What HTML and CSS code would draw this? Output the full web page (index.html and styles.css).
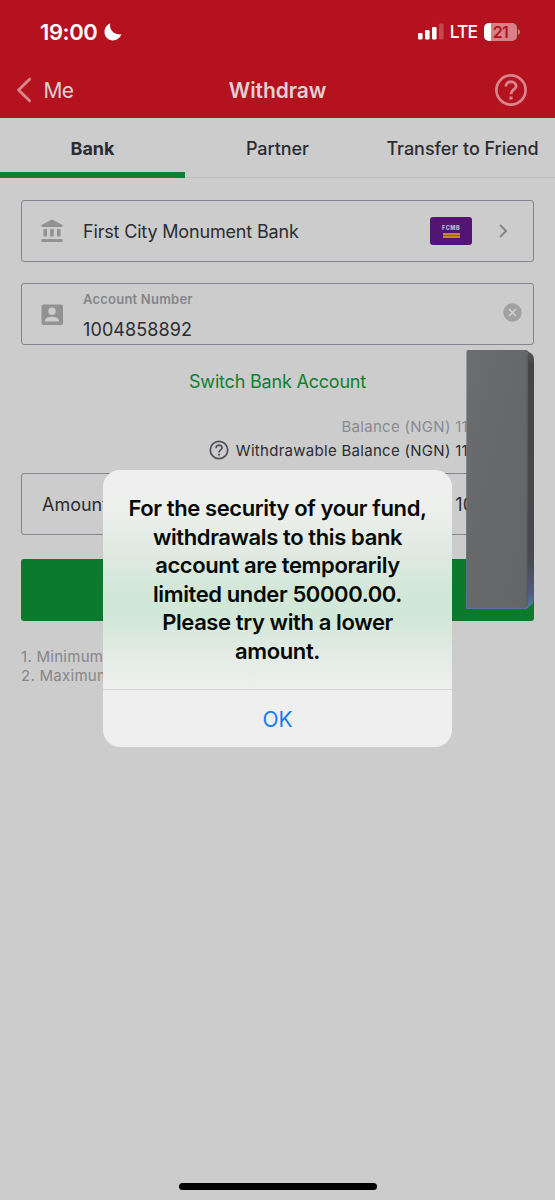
FILE: index.html
```html
<!DOCTYPE html>
<html lang="en">
<head>
<meta charset="utf-8">
<title>Withdraw</title>
<link rel="stylesheet" href="styles.css">
</head>
<body>
<div class="screen">
  <header class="header">
    <div class="status">
      <div class="status-left">
        <span class="clock">19:00</span>
        <svg class="moon" width="18" height="18" viewBox="0 0 18 18"><path d="M6.200.6C5 6.800 9.800 12.200 17.400 11.300C15.800 15.300 12.600 17.500 8.800 17.500C4 17.500.5 13.900.5 9.100C.5 5.200 2.700 1.900 6.200.6Z" fill="#fff"/></svg>
      </div>
      <div class="status-right">
        <svg width="26" height="17" viewBox="0 0 26 17" fill="#fff"><rect x="0" y="10" width="4.600" height="6.500" rx="1.300"/><rect x="7" y="7" width="4.600" height="9.500" rx="1.300"/><rect x="14" y="4" width="4.600" height="12.500" rx="1.300"/><rect x="21" y="0.500" width="4.600" height="16" rx="1.300" opacity=".22"/></svg>
        <span class="lte">LTE</span>
        <div class="battery"><span class="battery-level">21</span></div>
        <svg class="battery-tip" width="2" height="6" viewBox="0 0 2 6"><path d="M0 0Q2 1 2 3T0 6Z" fill="#da8087"/></svg>
      </div>
    </div>
    <nav class="nav">
      <div class="back">
        <svg width="16" height="26" viewBox="0 0 16 26"><path d="M13.600 2.200L2.600 13L13.600 23.800" fill="none" stroke="#d7858a" stroke-width="3" stroke-linecap="round" stroke-linejoin="round"/></svg>
        <span class="back-label">Me</span>
      </div>
      <h1 class="title">Withdraw</h1>
      <svg class="help" width="34" height="34" viewBox="0 0 34 34" fill="none" stroke="#d7858a"><circle cx="17" cy="17" r="14.600" stroke-width="2.700"/><path d="M11.900 13.500C11.900 10.500 14 8.700 17 8.700S22.100 10.600 22.100 13.200C22.100 16.500 17 16.600 17 21.300" stroke-width="2.900"/><path d="M17 23.500V26.500" stroke-width="3.200"/></svg>
    </nav>
  </header>
  <div class="tabs">
    <div class="tab tab-active">Bank</div>
    <div class="tab">Partner</div>
    <div class="tab">Transfer to Friend</div>
  </div>
  <main class="form">
    <div class="field">
      <svg class="field-icon" width="22" height="24" viewBox="0 0 22 24" fill="#929292"><path d="M11 .5L21.500 6V8H.5V6ZM2.500 10H6V17.500H2.500ZM9.200 10H12.700V17.500H9.200ZM16 10H19.500V17.500H16ZM.5 20H21.500V23H.5Z"/></svg>
      <span class="bank-name">First City Monument Bank</span>
      <div class="bank-logo"><span class="logo-text">FCMB</span><span class="logo-bars"></span></div>
      <svg class="chevron" width="8" height="14" viewBox="0 0 8 14"><path d="M1 1L7 7L1 13" fill="none" stroke="#85868b" stroke-width="2"/></svg>
    </div>
    <div class="field field-account">
      <svg class="field-icon" width="22" height="21" viewBox="0 0 22 21"><rect x=".5" y=".5" width="21.500" height="20.500" rx="2" fill="#929292"/><circle cx="11" cy="7.300" r="3.700" fill="#ccc"/><path d="M4 17.500V16.300C4 13.800 8.500 12.700 11 12.700S18 13.800 18 16.300V17.500Z" fill="#ccc"/></svg>
      <div class="account">
        <span class="account-label">Account Number</span>
        <span class="account-value">1004858892</span>
      </div>
      <svg class="clear" width="19" height="19" viewBox="0 0 19 19"><circle cx="9.500" cy="9.500" r="9.200" fill="#a1a1a1"/><path d="M6 6L13 13M13 6L6 13" stroke="#d0d0d0" stroke-width="1.600"/></svg>
    </div>
    <div class="switch">Switch Bank Account</div>
    <div class="balances">
      <div class="balance">Balance (NGN) 11</div>
      <div class="balance balance-dark">
        <svg width="20" height="20" viewBox="0 0 20 20" fill="none" stroke="#505156"><circle cx="10" cy="10" r="8.700" stroke-width="1.700"/><path d="M7 8.200C7 6.300 8.300 5.200 10 5.200S13 6.300 13 7.900C13 9.900 10 10 10 12.500" stroke-width="1.700"/><path d="M10 13.700V15.500" stroke-width="1.900"/></svg>
        <span>Withdrawable Balance (NGN) 11</span>
      </div>
    </div>
    <div class="field field-amount">
      <span>Amount</span>
      <span class="amount-value">10</span>
    </div>
    <div class="submit"></div>
    <div class="notes"><span>1. Minimum</span><span>2. Maximum</span></div>
  </main>
  <svg class="redaction" width="70" height="260" viewBox="0 0 70 260">
    <defs>
      <linearGradient id="face" x1="0" y1="0" x2="1" y2="1"><stop offset="0" stop-color="#6c6d6f"/><stop offset=".5" stop-color="#67686a"/><stop offset="1" stop-color="#646567"/></linearGradient>
      <linearGradient id="side" x1="0" y1="0" x2="0" y2="1"><stop offset="0" stop-color="#58585a"/><stop offset=".06" stop-color="#454548"/><stop offset=".8" stop-color="#48494c"/><stop offset=".94" stop-color="#505a80"/><stop offset="1" stop-color="#4682a5"/></linearGradient>
    </defs>
    <path d="M60 0L66 4Q68 6 68 9V249Q68 252 65 255L60 259Z" fill="url(#side)"/>
    <path d="M2 0H61L62 2L61 256L59 258.500H0L.5 2Q.5 0 2 0Z" fill="url(#face)"/>
    <path d="M61 3V256" stroke="#57585a" stroke-width="1"/>
    <path d="M0 208V258.300H61L67 252" fill="none" stroke="#6375a2" stroke-width="1"/>
  </svg>
  <div class="dialog">
    <div class="message">For the security of your fund,<br>withdrawals to this bank<br>account are temporarily<br>limited under 50000.00.<br>Please try with a lower<br>amount.</div>
    <div class="ok">OK</div>
  </div>
  <div class="home-bar"></div>
</div>
</body>
</html>
```

FILE: styles.css
```css
* { box-sizing: border-box; }
body { margin: 0; font-family: Inter, "Liberation Sans", sans-serif; }
.screen { position: relative; width: 555px; height: 1200px; background: #ccc; overflow: hidden; color: #2b2d33; white-space: nowrap; }
.header { height: 118px; background: #b5121f; }
.status { height: 62px; padding: 1px 35px 0 40px; display: flex; justify-content: space-between; align-items: center; color: #fff; }
.status-left, .status-right { display: flex; align-items: center; }
.clock { font-size: 22px; font-weight: 600; letter-spacing: -0.4px; }
.moon { margin-left: 7px; }
.lte { margin: 0 7px 0 6px; font-size: 17.500px; font-weight: 500; letter-spacing: -1px; }
.battery { width: 33px; height: 18px; border-radius: 5px; background: linear-gradient(90deg, #fff 7px, #da8087 7px); display: flex; align-items: center; justify-content: center; }
.battery-level { color: #b5121f; font-size: 16px; font-weight: 600; letter-spacing: -0.5px; }
.battery-tip { margin-left: 1px; }
.nav { height: 56px; padding: 0 27px 0 16px; display: grid; grid-template-columns: 1fr auto 1fr; align-items: center; color: #dfd0d1; }
.back { display: flex; align-items: center; gap: 11.500px; }
.back-label { font-size: 21px; letter-spacing: -0.6px; }
.title { margin: 0 0 0 11px; font-size: 21px; font-weight: 600; letter-spacing: -0.1px; }
.help { justify-self: end; margin-bottom: 1px; }
.tabs { display: grid; grid-template-columns: repeat(3, 1fr); height: 60px; }
.tab { display: flex; align-items: center; justify-content: center; border-bottom: 1px solid #bfbfbf; font-size: 18px; font-weight: 500; letter-spacing: -0.05px; padding-top: 1px; }
.tab-active { border-bottom: 6px solid #0d8032; font-weight: 700; padding-top: 6px; }
.form { padding: 22px 21px 0; }
.field { display: flex; align-items: center; height: 62px; border: 1.500px solid #85868d; border-radius: 3px; padding: 0 26px 0 19px; margin-bottom: 21px; }
.field-icon { flex: none; }
.bank-name { margin-left: 20px; font-size: 18px; letter-spacing: -0.17px; }
.bank-logo { margin-left: auto; width: 42px; height: 28px; border-radius: 3px; background: #531573; display: flex; flex-direction: column; align-items: center; justify-content: center; gap: 2px; }
.logo-text { font-size: 5.500px; line-height: 6px; font-weight: 800; letter-spacing: .5px; color: #c9b4d4; }
.logo-bars { width: 17px; height: 5px; background: linear-gradient(#c48926 2px, #96602f 2px, #96602f 3px, #c48926 3px); }
.chevron { margin-left: 27px; }
.field-account { padding-right: 11px; }
.account { display: flex; flex-direction: column; margin-left: 20px; padding-top: 3px; }
.account-label { font-size: 13px; line-height: 16px; font-weight: 600; letter-spacing: .22px; color: #85868b; }
.account-value { font-size: 18px; line-height: 22px; margin-top: 12px; letter-spacing: .1px; }
.clear { margin-left: auto; margin-bottom: 4px; }
.switch { text-align: center; height: 32px; line-height: 32px; font-size: 18px; letter-spacing: -0.2px; color: #0d8032; }
.balances { margin-top: 16px; }
.balance { height: 24px; display: flex; align-items: center; justify-content: flex-end; padding-right: 66px; font-size: 15px; letter-spacing: .29px; color: #898a90; }
.balance-dark { gap: 7px; color: #2b2d33; }
.field-amount { margin-top: 11px; padding: 0 59px 0 20px; justify-content: space-between; margin-bottom: 24px; font-size: 18px; }
.submit { height: 62px; border-radius: 3px; background: #0b7a2c; }
.notes { margin-top: 27px; display: flex; flex-direction: column; font-size: 15px; line-height: 18.500px; letter-spacing: .28px; color: #85868b; }
.redaction { position: absolute; left: 466px; top: 350px; }
.dialog { position: absolute; left: 103px; top: 470px; width: 349px; height: 277px; border-radius: 17px; background: linear-gradient(#efefef 0, #edefed 40px, #dfe9e1 85px, #d1e7d7 125px, #d1e7d7 145px, #e2ebe4 182px, #eeefee 218px, #efefef); color: #050a07; text-align: center; }
.message { height: 220px; padding-top: 24px; border-bottom: 1.500px solid #d5d5d5; font-size: 22px; line-height: 28.500px; font-weight: 600; letter-spacing: -0.39px; }
.ok { height: 57px; line-height: 60px; font-size: 21px; color: #147bf2; }
.home-bar { position: absolute; left: 179px; top: 1183px; width: 198px; height: 7px; border-radius: 4px; background: #000; }
```
